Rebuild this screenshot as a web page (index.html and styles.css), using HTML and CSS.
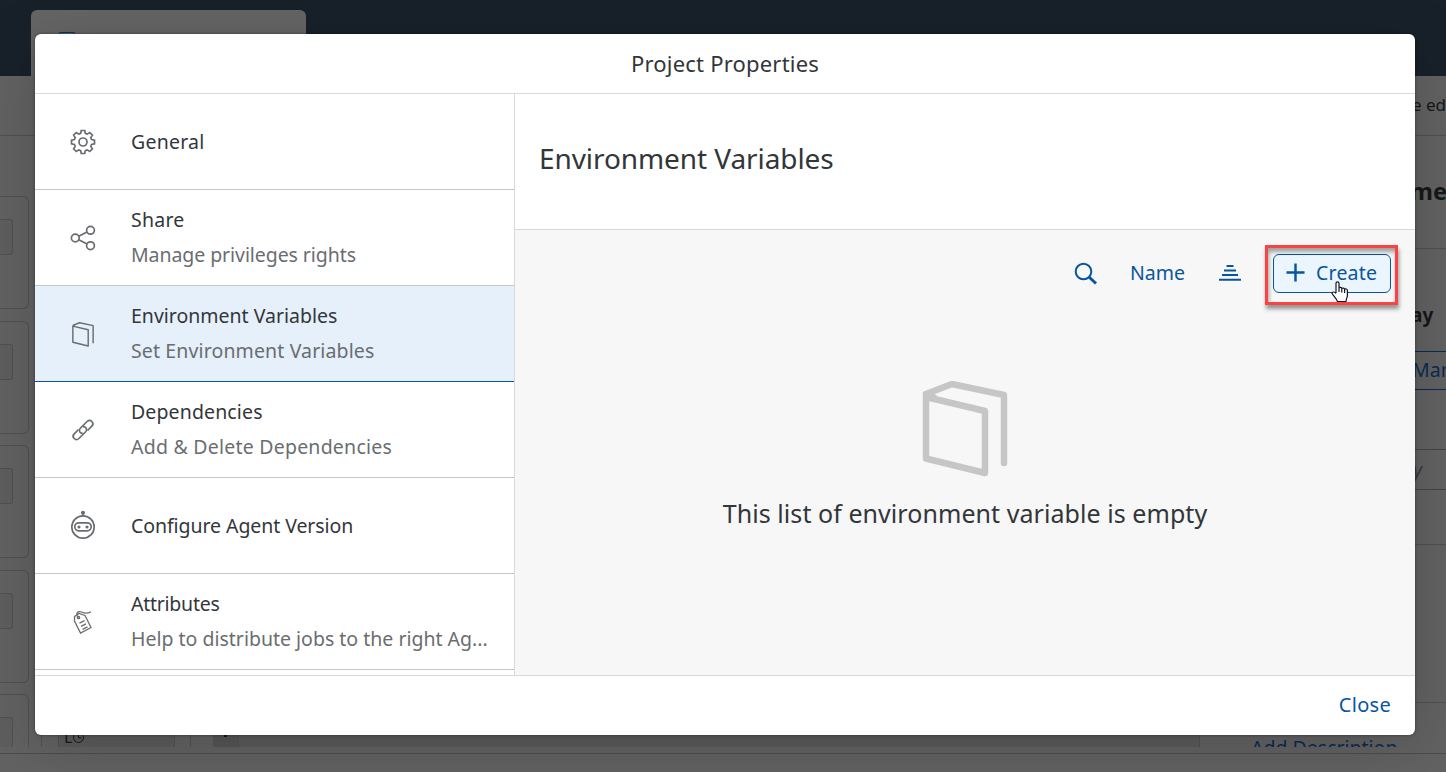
FILE: index.html
```html
<!DOCTYPE html>
<html lang="en">
<head>
<meta charset="utf-8">
<title>Project Properties</title>
<link rel="stylesheet" href="styles.css">
</head>
<body>
<svg class="defs" width="0" height="0" aria-hidden="true">
  <symbol id="box" viewBox="0 0 86 96"><path d="M4 13v64.500l59 14.500V30L4 16M4 13L30 3l52 11v68M4 13l8 3.500"/></symbol>
</svg>
<div class="page">
  <header class="shell"><div class="tab"><span class="tab-icon"></span></div></header>
  <div class="toolbar"><span>e ed</span></div>
  <div class="workspace">
    <aside class="cards">
      <div class="card"><i></i></div>
      <div class="card"><i></i></div>
      <div class="card"><i></i></div>
      <div class="card"><i></i></div>
      <div class="card"><i></i></div>
    </aside>
    <div class="canvas">
      <div class="lane"><div class="step">L<svg width="13" height="13" viewBox="0 0 13 13"><circle cx="6.500" cy="6.500" r="5"/><path d="M6.500 3.500v3.500h3"/></svg></div></div>
      <div class="track"><div class="track-head"><b></b></div></div>
    </div>
    <aside class="panel">
      <div class="p-title">me</div>
      <div class="p-label">ay</div>
      <div class="p-button">Mar</div>
      <div class="p-input">y</div>
      <div class="p-gap"></div>
      <div class="p-space"></div>
      <div class="p-link">Add Description</div>
    </aside>
  </div>
  <footer class="status"></footer>
</div>

<section class="dialog" role="dialog">
  <h1 class="dialog-title"><span>Project Properties</span></h1>
  <div class="dialog-body">
    <nav class="list">
      <div class="item">
        <svg class="icon" viewBox="0 0 26 26"><circle cx="13" cy="13" r="4"/><path d="M11.200 1.500h3.600l.5 2.800 2 .8 2.400-1.600 2.700 2.700-1.600 2.400.8 2 2.900.6v3.600l-2.900.6-.8 2 1.600 2.400-2.700 2.700-2.400-1.600-2 .8-.5 2.800h-3.600l-.5-2.800-2-.8-2.400 1.600-2.700-2.700 1.600-2.400-.8-2-2.900-.6v-3.600l2.900-.6.8-2-1.600-2.400 2.700-2.700 2.400 1.600 2-.8z"/></svg>
        <div class="copy single"><div class="name wide">General</div></div>
      </div>
      <div class="item">
        <svg class="icon" viewBox="0 0 26 26"><circle cx="5.300" cy="13" r="3.900"/><circle cx="20.500" cy="5.300" r="3.900"/><circle cx="20.500" cy="20.700" r="3.900"/><path d="M8.800 11.200l8.200-4.200M8.800 14.800l8.200 4.200"/></svg>
        <div class="copy"><div class="name wide">Share</div><div class="hint snug">Manage privileges rights</div></div>
      </div>
      <div class="item selected">
        <svg class="icon book" viewBox="0 0 86 96"><use href="#box"/></svg>
        <div class="copy"><div class="name">Environment Variables</div><div class="hint loose">Set Environment Variables</div></div>
      </div>
      <div class="item">
        <svg class="icon" viewBox="0 0 26 26"><path d="M12.800 16.300c-2.600.2-4.600-2.500-2.700-4.800l7-7c1.500-1.400 3.500-1.200 4.700 0 1.300 1.300 1.400 3.300 0 4.700l-4.300 4.300"/><path d="M13 9.700c2.800-.2 4.800 2.600 2.900 4.800l-7 7c-1.500 1.400-3.500 1.200-4.700 0-1.300-1.300-1.400-3.300 0-4.700l4.300-4.300"/></svg>
        <div class="copy"><div class="name loose">Dependencies</div><div class="hint wide">Add &amp; Delete Dependencies</div></div>
      </div>
      <div class="item">
        <svg class="icon robot" viewBox="0 0 26 30"><circle cx="13" cy="17" r="11.200"/><path d="M13 2.500v3"/><circle class="solid" cx="13" cy="2.800" r="1.200"/><rect x="4.800" y="12.800" width="16.400" height="8" rx="4"/><circle class="solid" cx="9" cy="17" r=".7"/><circle class="solid" cx="17" cy="17" r=".7"/></svg>
        <div class="copy single"><div class="name snug">Configure Agent Version</div></div>
      </div>
      <div class="item">
        <svg class="icon tag" viewBox="0 0 26 26"><path d="M4.500 7.500L9 4.500l6 2L21 18.500 10.500 24 4.500 12zM8.500 8.500c-3.500-4-1-6.700 3-5.500 3 1.500 6 1.800 9.500-.3M9.500 14.200l5-2.500M11 17.300l5-2.500M12.500 20.300l5-2.500"/><circle cx="8.500" cy="8.500" r="1.200"/></svg>
        <div class="copy"><div class="name tight">Attributes</div><div class="hint">Help to distribute jobs to the right Ag...</div></div>
      </div>
    </nav>
    <main class="detail">
      <h2 class="detail-title">Environment Variables</h2>
      <div class="detail-content">
        <div class="actions">
          <svg class="search" viewBox="0 0 24 24"><circle cx="9.500" cy="9.500" r="7.800"/><path d="M15 15l7 6.500"/></svg>
          <span class="sort-name">Name</span>
          <svg class="sort" viewBox="0 0 22 16"><path d="M7.500 1h7M5 5.500h12M3 10h16M0 14.700h22"/></svg>
          <button class="create"><svg class="plus" viewBox="0 0 20 20"><path d="M10 .5v19M.5 10h19"/></svg><span>Create</span></button>
        </div>
        <div class="empty">
          <svg class="empty-icon" viewBox="0 0 86 96"><use href="#box"/></svg>
          <p>This list of environment variable is empty</p>
        </div>
      </div>
    </main>
  </div>
  <footer class="dialog-footer"><span>Close</span></footer>
</section>
<div class="highlight"></div>
<svg class="cursor" viewBox="0 0 18 21"><path d="M5 12V2.200C5 .4 8 .4 8 2.200V7c.5-1 2.700-.8 2.800.6.6-1 2.600-.7 2.800.7.700-.8 2.800-.5 2.800 1.200v5c0 2-1.400 3.500-1.400 6H6.500c-.5-2-3-4.500-5.500-8 0-2 2.500-2 4 0M8 7v4M10.800 7.500V11.500M13.600 8.500V12"/></svg>
</body>
</html>
```

FILE: styles.css
```css
* { box-sizing: border-box; }
body { margin: 0; overflow: hidden; font-family: "Noto Sans", sans-serif; font-size: 19.5px; color: #32363a; }
h1, h2, p { margin: 0; font-weight: 400; }
svg { fill: none; stroke: currentColor; flex: none; display: block; }
.defs { position: absolute; }

.page { width: 1446px; height: 772px; display: flex; flex-direction: column; background: #626262; color: #161718; overflow: hidden; }
.shell { height: 76px; flex: none; padding: 10px 0 0 31px; background: #18212a; }
.tab { width: 275px; height: 66px; border-radius: 6px 6px 0 0; background: #656565; padding: 22px 0 0 28px; }
.tab-icon { display: block; width: 16px; height: 16px; border: 1px solid #07366a; border-radius: 1px; }
.toolbar { height: 60px; flex: none; border-bottom: 1px solid #505050; padding-left: 1412px; line-height: 58px; font-size: 17px; white-space: nowrap; }
.workspace { height: 611px; flex: none; display: flex; overflow: hidden; }
.cards { width: 41px; padding-top: 60px; display: flex; flex-direction: column; gap: 11.600px; }
.card { width: 29px; height: 113px; flex: none; border: 1px solid #515151; border-left: 0; border-radius: 0 6px 6px 0; padding-top: 22px; }
.card i { display: block; width: 13px; height: 36px; border: 1px solid #515151; border-left: 0; border-radius: 0 3px 3px 0; background: #5e5e5e; }
.canvas { width: 1159px; display: flex; align-items: stretch; }
.lane { width: 150px; border: solid #515151; border-width: 0 1px; padding-left: 16px; display: flex; }
.step { width: 117px; border: solid #515151; border-width: 0 1px; background: #5b5b5b; display: flex; align-items: flex-end; padding: 0 0 1px 5px; font-size: 16px; line-height: 17px; }
.step svg { margin-bottom: 2px; }
.track { margin-left: 22px; flex: 1; background: #5a5a5a; border-right: 1px solid #515151; }
.track-head { width: 26px; height: 100%; border-right: 1px solid #535353; background: #555; display: flex; align-items: flex-end; justify-content: center; padding-bottom: 10px; }
.track-head b { width: 3px; height: 3px; background: #161718; }
.panel { width: 246px; display: flex; flex-direction: column; white-space: nowrap; }
.panel > div { flex: none; padding-left: 211px; border-bottom: 1px solid #505050; }
.panel .p-title { height: 113px; font-weight: 700; font-size: 23.500px; line-height: 111px; padding-left: 210px; }
.panel .p-label { height: 103px; font-weight: 700; font-size: 19px; padding-top: 52px; line-height: 28px; border-bottom-color: #0a2c50; }
.panel .p-button { height: 38px; line-height: 36px; color: #0a2c50; border-bottom-color: #0a2c50; padding-left: 212px; }
.panel .p-input { height: 100px; padding-top: 59px; line-height: 42px; font-style: italic; color: #38393b; border-bottom-color: #454545; background: linear-gradient(#454545, #454545) 0 59px / 100% 1px no-repeat; padding-left: 213px; }
.panel .p-gap { height: 55px; }
.panel .p-space { height: 158px; }
.panel .p-link { height: 60px; padding: 31px 0 0 51px; line-height: 28px; color: #0a2c50; border: 0; letter-spacing: 0; }
.status { margin-top: 6px; height: 19px; border-top: 1px solid #4d4d4d; }

.dialog { position: absolute; left: 35px; top: 34px; width: 1380px; height: 701px; display: flex; flex-direction: column; background: #fff; border-radius: 6px; overflow: hidden; box-shadow: 0 0 3px rgba(0,0,0,.45), 0 10px 60px rgba(0,0,0,.18); }
.dialog-title { height: 60px; flex: none; border-bottom: 1px solid #d9d9d9; font-size: 22px; letter-spacing: .2px; line-height: 59px; text-align: center; }
.dialog-body { height: 582px; flex: none; display: flex; border-bottom: 1px solid #d9d9d9; }
.list { width: 480px; border-right: 1px solid #d9d9d9; }
.item { height: 96px; border-bottom: 1px solid #c6c6c6; display: flex; align-items: center; padding-left: 35px; }
.item.selected { background: #e5f0fa; border-bottom-color: #0854a0; }
.icon { width: 26px; height: 26px; color: #6a6d70; stroke-width: 1.700; margin-top: 1px; }
.icon.book { width: 24px; height: 25px; margin: 2px 1px 0; stroke-width: 5.500; stroke-linejoin: round; }
.icon.robot { height: 30px; margin-top: -1px; }
.icon.tag { stroke-width: 1.300; }
.solid { fill: currentColor; }
.copy { margin-left: 35px; line-height: 35px; white-space: nowrap; padding-bottom: 2px; }
.copy.single { padding-bottom: 0; }
.wide { letter-spacing: .23px; }
.loose { letter-spacing: .13px; }
.snug { letter-spacing: -.07px; }
.tight { letter-spacing: -.25px; }
.hint { color: #6a6d70; }
.detail { flex: 1; display: flex; flex-direction: column; }
.detail-title { height: 136px; flex: none; border-bottom: 1px solid #d9d9d9; padding-left: 24px; font-size: 28px; letter-spacing: -.08px; line-height: 128px; }
.detail-content { flex: 1; background: #f7f7f7; }
.actions { height: 87px; display: flex; justify-content: flex-end; align-items: center; padding-right: 24px; color: #0854a0; }
.search { width: 24px; height: 24px; stroke-width: 2; margin-right: 32px; }
.search path { stroke-width: 3; }
.sort-name { padding-bottom: 2px; }
.sort { width: 22px; height: 16px; stroke-width: 2; margin: 0 32px 1px 34px; }
.create { width: 118px; height: 39px; margin-bottom: 1px; border: 1px solid #0854a0; border-radius: 6px; background: #ebf5fe; color: inherit; font: inherit; letter-spacing: .2px; display: flex; align-items: center; gap: 11px; padding: 0 0 1px 12px; }
.plus { width: 19px; height: 19px; stroke-width: 2.600; }
.empty { padding-top: 64px; display: flex; flex-direction: column; align-items: center; font-size: 25px; }
.empty-icon { width: 86px; height: 96px; color: #c6c6c6; stroke-width: 6.500; stroke-linejoin: round; stroke-linecap: round; }
.empty p { margin-top: 18px; line-height: 36px; letter-spacing: .06px; white-space: nowrap; }
.dialog-footer { height: 59px; text-align: right; padding-right: 24px; line-height: 57px; font-size: 20px; letter-spacing: .3px; color: #0854a0; }
.highlight { position: absolute; left: 1265px; top: 245px; width: 133px; height: 60px; border: 3px solid #fb4343; box-shadow: 1px 4px 4px rgba(0,0,0,.4), inset 1px 4px 4px rgba(0,0,0,.35); }
.cursor { position: absolute; left: 1331px; top: 281px; width: 18px; height: 21px; fill: #fff; color: #111827; stroke-width: 1.200; }
```
